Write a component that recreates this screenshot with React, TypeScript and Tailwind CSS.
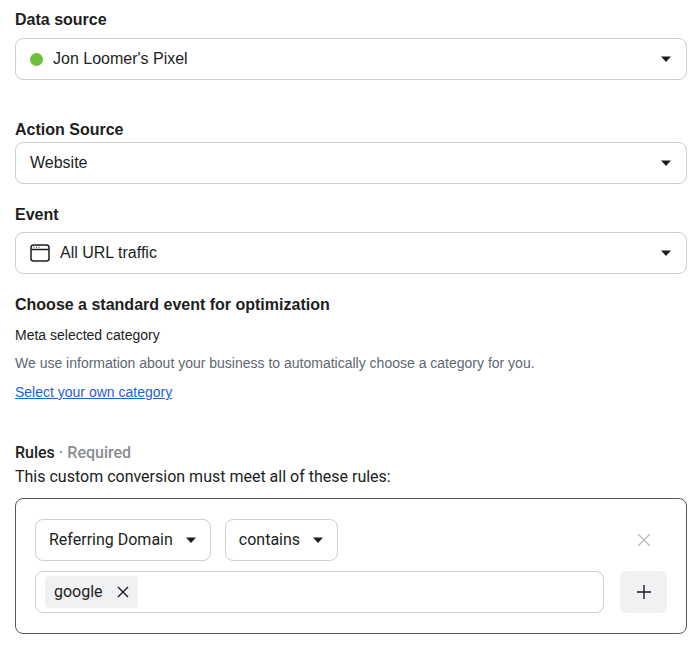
import React from "react";

const Caret = () => (
  <svg width="12" height="8" viewBox="0 0 12 8"><path d="M1 1.5 L11 1.5 L6 7 Z" fill="#1c1e21" /></svg>
);

function Select({ children, mt }: { children: React.ReactNode; mt: string }) {
  return (
    <div className={`${mt} h-[42px] border border-[#ccd0d5] rounded-[8px] flex items-center px-[14px] justify-between`}>
      <div className="flex items-center gap-[10px] text-[16px] text-[#1c1e21]">{children}</div>
      <Caret />
    </div>
  );
}

export default function App() {
  return (
    <div className="w-[700px] h-[649px] bg-white px-[15px] pt-[10px] pr-[13px]" style={{ fontFamily: "'Liberation Sans', Arial, sans-serif" }}>
      <div className="text-[16px] font-bold text-[#1c1e21] leading-[20px]">Data source</div>
      <Select mt="mt-[8px]">
        <span className="w-[13px] h-[13px] rounded-full bg-[#6cc03b]" />
        <span>Jon Loomer's Pixel</span>
      </Select>
      <div className="mt-[40px] text-[16px] font-bold text-[#1c1e21] leading-[20px]">Action Source</div>
      <Select mt="mt-[2px]"><span>Website</span></Select>
      <div className="mt-[21px] text-[16px] font-bold text-[#1c1e21] leading-[20px]">Event</div>
      <Select mt="mt-[7px]">
        <svg width="20" height="18" viewBox="0 0 20 18" fill="none" stroke="#1c1e21" strokeWidth="1.5">
          <rect x="1" y="1" width="18" height="16" rx="2.5" />
          <path d="M1 5.5 H19" />
          <path d="M3.5 3.2 H4.5 M6 3.2 H7 M8.5 3.2 H9.5" strokeWidth="1" />
        </svg>
        <span>All URL traffic</span>
      </Select>
      <div className="mt-[21px] text-[16px] font-bold text-[#1c1e21] leading-[20px]">Choose a standard event for optimization</div>
      <div className="mt-[11px] text-[14px] text-[#1c1e21] leading-[18px]">Meta selected category</div>
      <div className="mt-[10px] text-[14px] text-[#606770] leading-[18px]">We use information about your business to automatically choose a category for you.</div>
      <div className="mt-[11px] text-[14px] text-[#1d62d6] underline leading-[18px]">Select your own category</div>
      <div style={{ fontFamily: "Roboto, sans-serif" }}>
        <div className="mt-[42px] text-[16px] leading-[20px] font-medium text-[#1c1e21]">
          Rules <span className="text-[#8a8d91]">· Required</span>
        </div>
        <div className="mt-[4px] text-[16px] leading-[20px] text-[#1c1e21]">This custom conversion must meet all of these rules:</div>
        <div className="mt-[11px] border border-[#55585c] rounded-[8px] px-[19px] pt-[20px] pb-[20px]">
          <div className="flex items-center gap-[14px]">
            <div className="h-[42px] border border-[#ccd0d5] rounded-[8px] flex items-center gap-[12px] px-[13px] text-[16px] text-[#1c1e21]">
              Referring Domain <Caret />
            </div>
            <div className="h-[42px] border border-[#ccd0d5] rounded-[8px] flex items-center gap-[12px] px-[13px] text-[16px] text-[#1c1e21]">
              contains <Caret />
            </div>
            <div className="flex-1" />
            <svg width="16" height="16" viewBox="0 0 16 16" className="mr-[15px]" stroke="#b8bbbf" strokeWidth="1.3"><path d="M2 2 L14 14 M14 2 L2 14" /></svg>
          </div>
          <div className="mt-[10px] flex items-center gap-[16px]">
            <div className="flex-1 h-[42px] border border-[#ccd0d5] rounded-[8px] flex items-center px-[9px]">
              <div className="h-[32px] bg-[#f0f1f3] rounded-[4px] flex items-center gap-[14px] px-[9px] text-[16px] text-[#1c1e21]">
                google
                <svg width="12" height="12" viewBox="0 0 12 12" stroke="#1c1e21" strokeWidth="1.4"><path d="M1 1 L11 11 M11 1 L1 11" /></svg>
              </div>
            </div>
            <div className="w-[47px] h-[42px] bg-[#f0f1f3] rounded-[6px] flex items-center justify-center">
              <svg width="14" height="14" viewBox="0 0 14 14" stroke="#1c1e21" strokeWidth="1.4"><path d="M7 0 V14 M0 7 H14" /></svg>
            </div>
          </div>
        </div>
      </div>
    </div>
  );
}
